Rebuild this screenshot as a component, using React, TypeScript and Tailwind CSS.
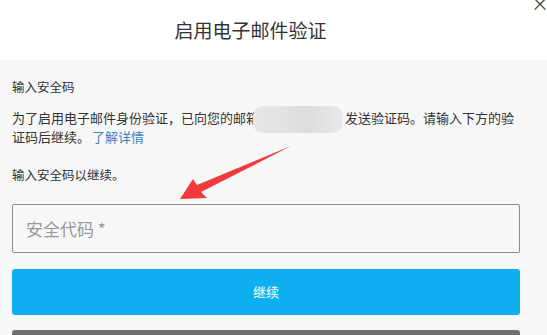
import React from 'react';

function Arrow() {
  return (
    <svg className="absolute left-0 top-0 pointer-events-none" width="547" height="335" viewBox="0 0 547 335">
      <polygon points="180,199 193,179 197,185 291,146 201,192 207,198" fill="#ef3b3b" />
    </svg>
  );
}

function App() {
  return (
    <div className="relative w-[547px] h-[335px] overflow-hidden bg-[#f7f7f7] text-[#333] font-['Noto_Sans_CJK_SC',sans-serif]">
      {/* Header */}
      <div className="relative h-[60px] bg-white flex items-center justify-center pr-[46px]">
        <h1 className="text-[19px] font-normal text-[#333]">启用电子邮件验证</h1>
        <span className="absolute right-[-2px] top-[-10px] text-[18px] text-[#444]">×</span>
      </div>

      {/* Body */}
      <div className="pl-[12px] pr-[27px] pt-[18px]">
        <p className="text-[12.5px] leading-[18px]">输入安全码</p>

        <p className="mt-[13px] text-[13px] leading-[18px]">
          为了启用电子邮件身份验证，已向您的邮箱
          <span className="inline-block align-middle w-[90px] h-[27px] -my-[5px] -ml-[6px] mr-[2px] rounded-[10px] bg-[linear-gradient(90deg,#e6e6e6_0%,#e2e2e2_35%,#dcdcdc_60%,#e9e9e9_100%)]"></span>
          发送验证码。请输入下方的验证码后继续。
          <a className="ml-[2px] text-[#3b7fc0]">了解详情</a>
        </p>

        <p className="mt-[20px] text-[12.5px] leading-[18px]">输入安全码以继续。</p>

        <div className="mt-[20px] h-[49px] border border-[#8c8c8c] rounded-[2px] bg-[#f7f7f7] flex items-center px-[13px]">
          <span className="text-[17px] text-[#999]">安全代码 *</span>
        </div>

        <button className="mt-[16px] w-full h-[46px] rounded-[3px] bg-[#0eaff0] text-white text-[13px]">继续</button>

        <div className="mt-[15px] w-full h-[40px] rounded-[3px] bg-[#707070]"></div>
      </div>

      <Arrow />
    </div>
  );
}

export default App;
